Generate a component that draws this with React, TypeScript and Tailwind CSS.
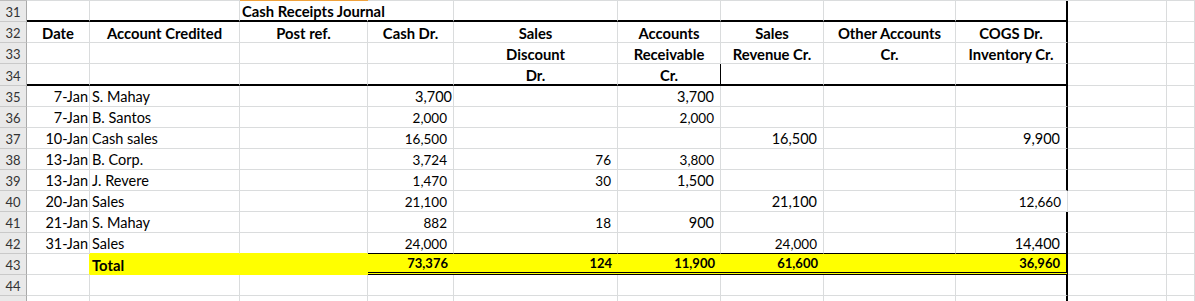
import React from "react";

// Excel-like grid: row header + columns B..L
const GRID =
  "grid grid-cols-[27px_63px_150px_128px_86px_164px_103px_103px_132px_112px_99px_1fr]";

const GL = "border-b-[#dadcdd]";
const GR = "border-r-[#dadcdd]";

type Cell = {
  v?: string;
  a?: "l" | "c" | "r";
  t?: string; // text size / weight / padding
  bb?: string; // bottom border override
  br?: string; // right border override
  bg?: string;
};

const TXT = "text-[14.5px]";
const BIG = "text-[14.5px] pr-[6px]";
const SM = "text-[13.5px] pr-[6px]";
const HD = "font-bold text-[14.8px]";
const TOT = "font-bold text-[13px] pr-[6px]";

const THICK = "border-b-2 border-b-black";
const JR = "border-r-2 border-r-black";
const YEL = "border-r-[#ffff00]";

function Row({ n, h = "h-[21px]", cells }: { n: string; h?: string; cells: Cell[] }) {
  const full: Cell[] = [...cells];
  while (full.length < 11) full.push({});
  return (
    <>
      <div
        className={`${h} flex items-end justify-center bg-[#e9e9e9] border-r border-r-[#a9a9a9] border-b border-b-[#c9c9c9] text-[13px] leading-[18px] text-[#333]`}
      >
        {n}
      </div>
      {full.map((c, i) => {
        const just = c.a === "r" ? "justify-end" : c.a === "c" ? "justify-center" : "justify-start";
        const bb = c.bb ?? `border-b ${GL}`;
        const br = c.br ?? (i === 8 ? JR : `border-r ${GR}`);
        return (
          <div
            key={i}
            className={`${h} flex items-end ${just} whitespace-nowrap ${bb} ${br} ${c.bg ?? ""} text-black`}
          >
            {c.v && <span className={`leading-[18px] ${c.t ?? TXT}`}>{c.v}</span>}
          </div>
        );
      })}
    </>
  );
}

const hd = (v: string): Cell => ({ v, a: "c", t: HD });
const big = (v: string): Cell => ({ v, a: "r", t: BIG });
const sm = (v: string): Cell => ({ v, a: "r", t: SM });
const date = (v: string): Cell => ({ v, a: "r", t: `${TXT} pr-[1px]` });
const name = (v: string): Cell => ({ v, a: "l", t: `${TXT} pl-[2px]` });
const tot = (v: string): Cell => ({
  v,
  a: "r",
  t: TOT,
  bg: "bg-[#ffff00]",
  br: YEL,
  bb: "border-b-[3px] border-double border-b-black",
});
const topBlack = (c: Cell): Cell => ({ ...c, bb: "border-b border-b-black" });

export default function App() {
  const th = (c: Cell = {}): Cell => ({ ...c, bb: THICK });

  return (
    <div className="w-[1195px] h-[301px] overflow-hidden bg-white font-[Lato,'Liberation_Sans',sans-serif]">
      <div className={GRID}>
        {/* top edge of the visible area */}
        <div className="h-px bg-[#bdbdbd]" />
        <div className="h-px bg-[#dadcdd]" />
        <div className="h-px bg-[#dadcdd]" />
        <div className="h-px bg-[#f0a23c]" />
        {Array.from({ length: 8 }).map((_, i) => (
          <div key={i} className="h-px bg-[#dadcdd]" />
        ))}

        <Row
          n="31"
          h="h-[21px]"
          cells={[
            th(),
            th(),
            th({ v: "Cash Receipts Journal", a: "l", t: `${HD} pl-[2px]`, br: "border-r border-r-white" }),
            th(),
            th(),
            th(),
            th(),
            th(),
            th(),
          ]}
        />
        <Row
          n="32"
          cells={[
            hd("Date"),
            hd("Account Credited"),
            hd("Post ref."),
            hd("Cash Dr."),
            hd("Sales"),
            hd("Accounts"),
            hd("Sales"),
            hd("Other Accounts"),
            hd("COGS Dr."),
          ]}
        />
        <Row
          n="33"
          cells={[{}, {}, {}, {}, hd("Discount"), hd("Receivable"), hd("Revenue Cr."), hd("Cr."), hd("Inventory Cr.")]}
        />
        <Row
          n="34"
          h="h-[22px]"
          cells={[
            th(),
            th(),
            th(),
            th(),
            th(hd("Dr.")),
            th({ ...hd("Cr."), br: "border-r border-r-black" }),
            th(),
            th(),
            th(),
          ]}
        />
        <Row n="35" cells={[date("7-Jan"), name("S. Mahay"), {}, { ...big("3,700"), t: "text-[14.5px] pr-[1px]" }, {}, big("3,700")]} />
        <Row n="36" cells={[date("7-Jan"), name("B. Santos"), {}, sm("2,000"), {}, sm("2,000")]} />
        <Row
          n="37"
          cells={[date("10-Jan"), name("Cash sales"), {}, sm("16,500"), {}, {}, big("16,500"), {}, big("9,900")]}
        />
        <Row n="38" cells={[date("13-Jan"), name("B. Corp."), {}, sm("3,724"), sm("76"), sm("3,800")]} />
        <Row n="39" cells={[date("13-Jan"), name("J. Revere"), {}, sm("1,470"), sm("30"), big("1,500")]} />
        <Row
          n="40"
          cells={[
            date("20-Jan"),
            name("Sales"),
            {},
            sm("21,100"),
            {},
            {},
            big("21,100"),
            {},
            { ...sm("12,660"), br: `border-r ${GR}` },
          ]}
        />
        <Row n="41" cells={[date("21-Jan"), name("S. Mahay"), {}, sm("882"), sm("18"), big("900")]} />
        <Row
          n="42"
          cells={[
            date("31-Jan"),
            { ...name("Sales"), bb: "border-b border-b-[#ffff00]" },
            { bb: "border-b border-b-[#ffff00]" },
            topBlack(sm("24,000")),
            topBlack({}),
            topBlack({}),
            topBlack(sm("24,000")),
            topBlack({}),
            topBlack(big("14,400")),
          ]}
        />
        <Row
          n="43"
          cells={[
            { br: "border-r border-r-[#ffff00]" },
            {
              v: "Total",
              a: "l",
              t: `${HD} pl-[2px]`,
              bg: "bg-[#ffff00]",
              br: YEL,
              bb: "border-b border-b-[#ffff00]",
            },
            { bg: "bg-[#ffff00]", br: YEL, bb: "border-b border-b-[#ffff00]" },
            tot("73,376"),
            tot("124"),
            tot("11,900"),
            tot("61,600"),
            tot(""),
            { ...tot("36,960"), br: JR },
          ]}
        />
        <Row n="44" cells={[]} />
        <Row n="" cells={[]} />
      </div>
    </div>
  );
}
